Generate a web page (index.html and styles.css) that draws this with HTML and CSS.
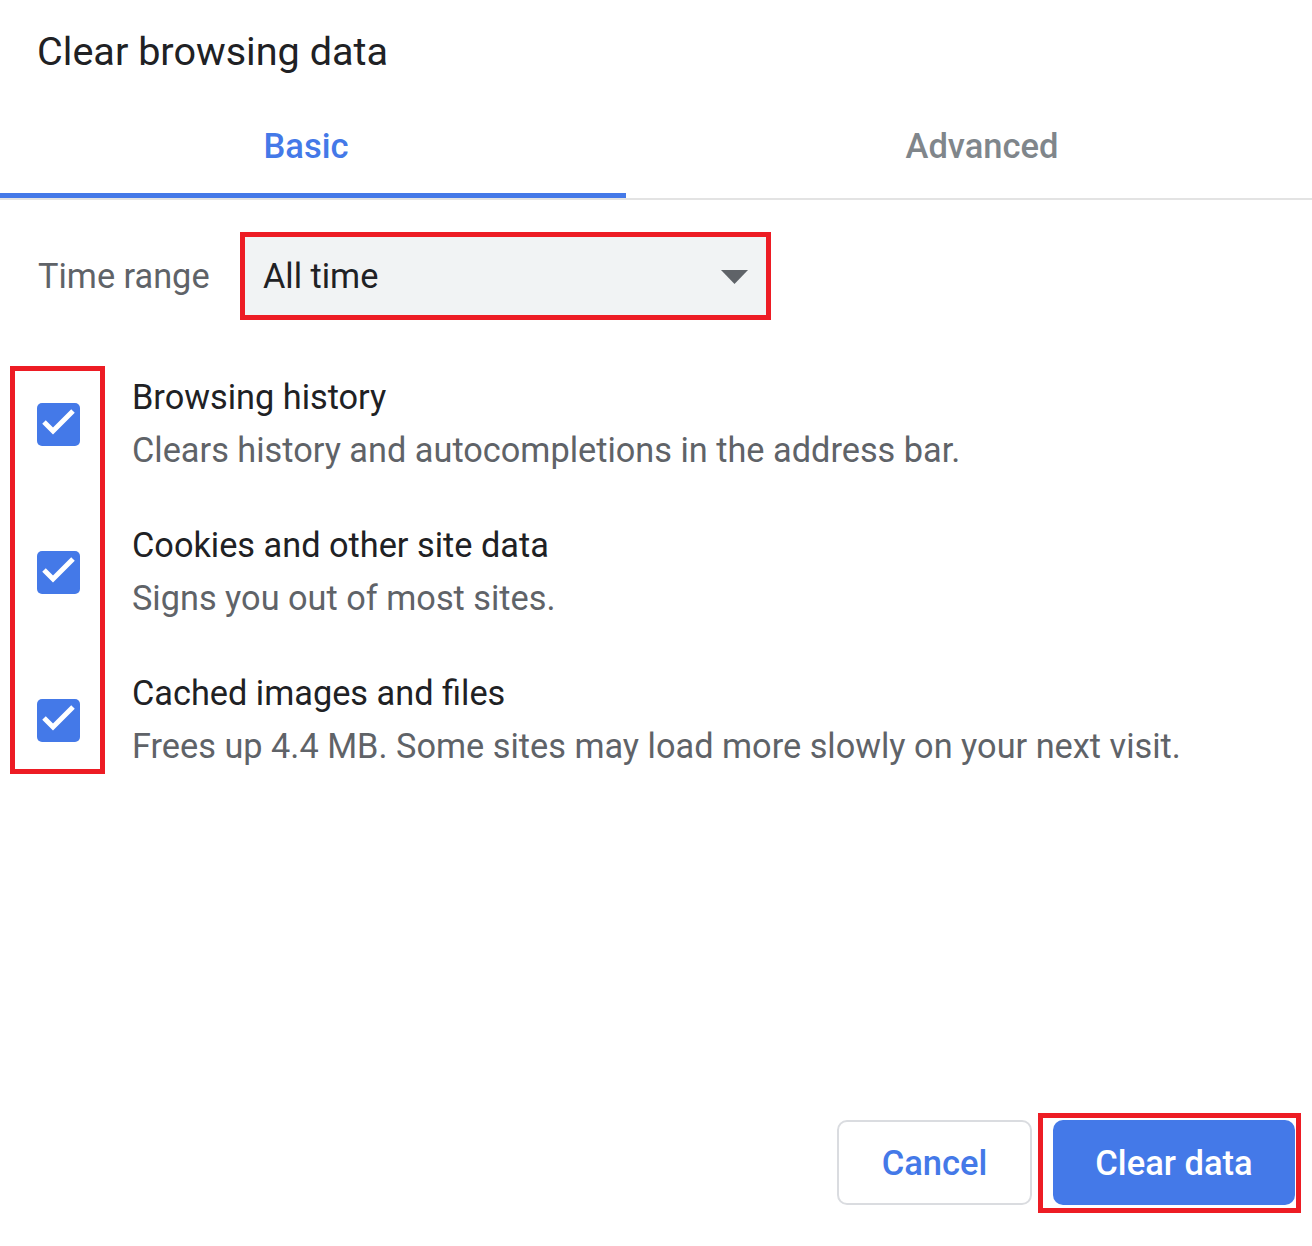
FILE: index.html
```html
<!DOCTYPE html>
<html lang="en">
<head>
<meta charset="utf-8">
<title>Clear browsing data</title>
<link rel="stylesheet" href="styles.css">
</head>
<body>
<div class="dialog">
  <h1 class="title">Clear browsing data</h1>
  <div class="tabs">
    <div class="tab tab-basic active">Basic</div>
    <div class="tab tab-advanced">Advanced</div>
  </div>
  <div class="range">
    <span class="range-label">Time range</span>
    <div class="select annotated">
      <span class="select-value">All time</span>
      <svg class="select-arrow" width="27" height="14" viewBox="0 0 27 14"><polygon points="0,0 27,0 13.5,14" fill="#5f6368"/></svg>
    </div>
  </div>
  <div class="items">
    <div class="item">
      <span class="checkbox"><svg width="43" height="43" viewBox="0 0 43 43"><polyline points="7,19 16,28 36,8" fill="none" stroke="#fff" stroke-width="5"/></svg></span>
      <div class="item-text">
        <div class="item-title">Browsing history</div>
        <div class="item-desc">Clears history and autocompletions in the address bar.</div>
      </div>
    </div>
    <div class="item">
      <span class="checkbox"><svg width="43" height="43" viewBox="0 0 43 43"><polyline points="7,19 16,28 36,8" fill="none" stroke="#fff" stroke-width="5"/></svg></span>
      <div class="item-text">
        <div class="item-title">Cookies and other site data</div>
        <div class="item-desc">Signs you out of most sites.</div>
      </div>
    </div>
    <div class="item">
      <span class="checkbox"><svg width="43" height="43" viewBox="0 0 43 43"><polyline points="7,19 16,28 36,8" fill="none" stroke="#fff" stroke-width="5"/></svg></span>
      <div class="item-text">
        <div class="item-title">Cached images and files</div>
        <div class="item-desc">Frees up 4.4 MB. Some sites may load more slowly on your next visit.</div>
      </div>
    </div>
    <div class="checks-mark"></div>
  </div>
  <div class="footer">
    <button class="btn btn-cancel">Cancel</button>
    <button class="btn btn-primary">Clear data<span class="btn-mark"></span></button>
  </div>
</div>
</body>
</html>
```
FILE: styles.css
```css
html, body {
  margin: 0;
  padding: 0;
  background: #ffffff;
}

body {
  font-family: Roboto, "Liberation Sans", Arial, sans-serif;
  color: #202124;
}

.dialog {
  width: 1312px;
  height: 1246px;
  display: flex;
  flex-direction: column;
  box-sizing: border-box;
}

.title {
  margin: 0;
  padding: 25px 0 0 37px;
  font-size: 39.6px;
  font-weight: 400;
  line-height: 53px;
  color: #202124;
}

.tabs {
  display: flex;
  border-bottom: 2px solid #e3e3e3;
}

.tab {
  font-size: 34.5px;
  font-weight: 500;
  line-height: 46px;
  padding: 45px 0 24px;
  border-bottom: 5px solid transparent;
  text-align: center;
  color: #80868b;
  box-sizing: border-box;
}

.tab-basic {
  flex: 0 0 626px;
  padding-right: 14px;
}

.tab-advanced {
  flex: 1 1 auto;
  padding-left: 26px;
}

.tab.active {
  color: #4479e8;
  border-bottom-color: #4479e8;
}

.range {
  display: flex;
  align-items: center;
  padding-left: 37px;
  margin-top: 32px;
}

.range-label {
  font-size: 34.3px;
  line-height: 46px;
  color: #5f6368;
  width: 202px;
  padding-left: 1px;
}

.select {
  position: relative;
  width: 531px;
  height: 88px;
  box-sizing: border-box;
  background: #f1f3f4;
  display: flex;
  align-items: center;
  justify-content: space-between;
  padding: 0 23px 0 23px;
}

.select-value {
  font-size: 34.3px;
  line-height: 46px;
  color: #202124;
}

.select-arrow {
  display: block;
  margin-top: 2px;
}

.annotated::after {
  content: "";
  position: absolute;
  inset: 0;
  border: 5px solid #ed1c24;
}

.items {
  position: relative;
  margin-top: 51px;
  display: flex;
  flex-direction: column;
  gap: 42px;
  padding-left: 37px;
}

.item {
  display: flex;
  align-items: center;
  gap: 52px;
}

.checkbox {
  width: 43px;
  height: 43px;
  border-radius: 5px;
  background: #4479e8;
  flex: 0 0 43px;
}

.checkbox svg {
  display: block;
}

.item-title,
.item-desc {
  font-size: 34.3px;
  line-height: 53px;
}

.item-title {
  color: #202124;
}

.item-desc {
  color: #5f6368;
}

.checks-mark {
  position: absolute;
  left: 10px;
  top: -5px;
  width: 95px;
  bottom: -1px;
  border: 5px solid #ed1c24;
  box-sizing: border-box;
}

.footer {
  margin-top: auto;
  display: flex;
  justify-content: flex-end;
  gap: 21px;
  padding: 0 17px 41px 0;
}

.btn {
  position: relative;
  height: 85px;
  box-sizing: border-box;
  border-radius: 10px;
  font-family: Roboto, "Liberation Sans", Arial, sans-serif;
  font-size: 34.5px;
  font-weight: 500;
  cursor: pointer;
  padding: 0;
}

.btn-cancel {
  width: 195px;
  background: #ffffff;
  border: 2px solid #dadce0;
  color: #4479e8;
}

.btn-primary {
  width: 242px;
  background: #4479e8;
  border: none;
  color: #ffffff;
}

.btn-mark {
  position: absolute;
  left: -15px;
  right: -6px;
  top: -7px;
  bottom: -8px;
  border: 5px solid #ed1c24;
}
```
